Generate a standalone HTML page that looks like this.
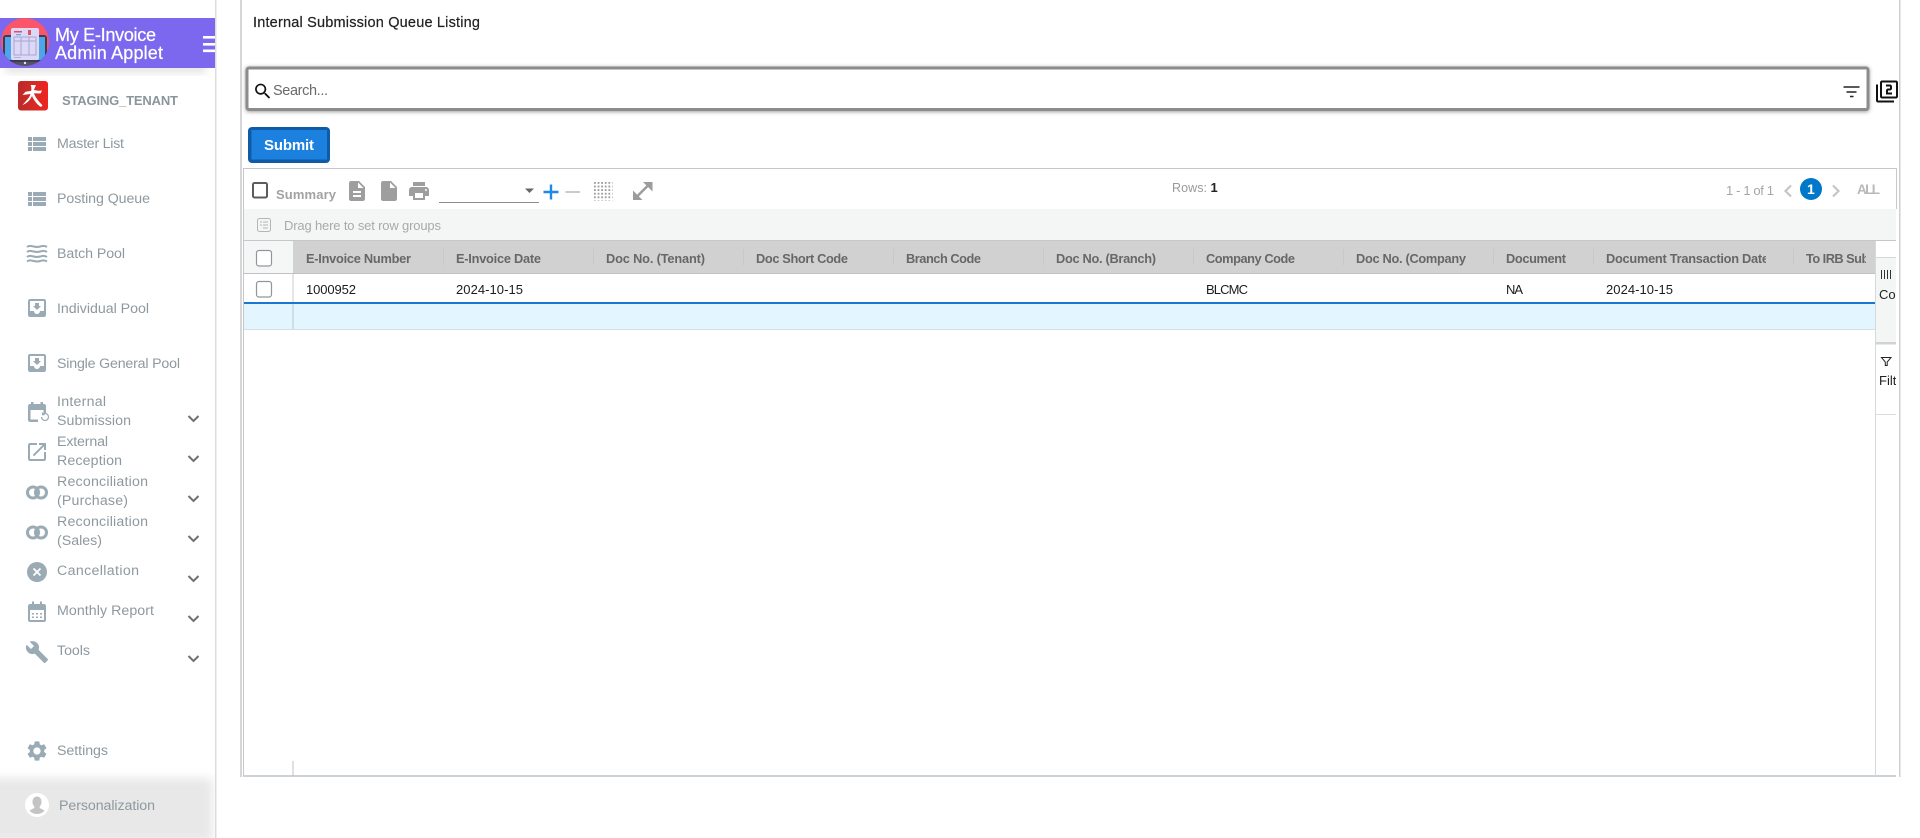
<!DOCTYPE html>
<html lang="en">
<head>
<meta charset="utf-8">
<title>Internal Submission Queue Listing</title>
<style>
html,body{margin:0;padding:0;width:1920px;height:838px;overflow:hidden;background:#fff}
svg{display:block}
text{font-family:"Liberation Sans",sans-serif;white-space:pre}
.m{font-size:14.2px;fill:#8e999f}
.h{font-size:12.8px;font-weight:bold;fill:#676767}
.d{font-size:13px;fill:#1c1c1c}
.ic{fill:#9aabb6}
.g{fill:#9e9e9e}
</style>
</head>
<body>
<svg width="1920" height="838" viewBox="0 0 1920 838" xmlns="http://www.w3.org/2000/svg">
<defs>
<filter id="sh" x="-5%" y="-40%" width="110%" height="200%"><feGaussianBlur stdDeviation="4"/></filter>
<filter id="s2" x="-2%" y="-30%" width="104%" height="160%"><feGaussianBlur stdDeviation="2.200"/></filter>
<filter id="s3" x="-20%" y="-40%" width="140%" height="180%"><feGaussianBlur stdDeviation="5"/></filter>
<clipPath id="logoC"><circle cx="25" cy="42" r="24"/></clipPath>
<clipPath id="sideC"><rect x="0" y="0" width="215" height="838"/></clipPath>
<clipPath id="c1"><rect x="1600" y="245" width="166" height="25"/></clipPath>
<clipPath id="c2"><rect x="1800" y="245" width="66" height="25"/></clipPath>
<clipPath id="c3"><rect x="1876" y="258" width="20" height="160"/></clipPath>
<clipPath id="c4"><rect x="1350" y="245" width="130" height="21"/></clipPath>
<linearGradient id="redG" x1="0" y1="0" x2="1" y2="0"><stop offset="0" stop-color="#bb2a2a"/><stop offset=".5" stop-color="#d42a26"/><stop offset="1" stop-color="#f12320"/></linearGradient>
<pattern id="dots" x="594" y="182" width="3.6" height="3.6" patternUnits="userSpaceOnUse"><rect width="1.8" height="1.8" fill="#9b9b9b"/></pattern>
</defs>

<!-- SIDEBAR -->
<rect x="215" y="0" width="1.5" height="838" fill="#dcdcdc"/>
<g clip-path="url(#sideC)">
  <rect x="6" y="66" width="200" height="6" fill="#888" opacity=".3" filter="url(#sh)"/>
  <rect x="0" y="18" width="215" height="50" fill="#7b68ee"/>
  <rect x="-30" y="778" width="243" height="64" fill="#e8e8e8" filter="url(#s3)"/>
</g>
<g clip-path="url(#logoC)">
  <rect x="0" y="18" width="50" height="48" fill="#fa5568"/>
  <rect x="0" y="52" width="50" height="16" fill="#545268"/>
  <rect x="3" y="35" width="44" height="27" rx="3" fill="#3e3c55"/>
  <rect x="5" y="37" width="40" height="23" fill="#4da5ec"/>
  <rect x="11" y="28" width="28" height="32" rx="2" fill="#dcd9f7"/>
  <rect x="14" y="37" width="22" height="18" fill="none" stroke="#a9a5d6" stroke-width="1"/>
  <path d="M14 41h22M21 37v18M29 37v18" stroke="#a9a5d6" stroke-width="1"/>
  <rect x="14" y="31" width="8" height="1.5" fill="#e84d5f"/>
  <rect x="16" y="34" width="5" height="1.3" fill="#6ba7e8"/>
  <rect x="28" y="30" width="3" height="5" fill="#e84d5f"/>
  <rect x="14" y="57" width="7" height="1" fill="#b5b2dc"/>
  <circle cx="25" cy="63" r="1.2" fill="#e6e6f5"/>
</g>
<text x="55" y="41" font-size="18" fill="#fff" stroke="#fff" stroke-width=".25" textLength="101" lengthAdjust="spacing">My E-Invoice</text>
<text x="55" y="59" font-size="18" fill="#fff" stroke="#fff" stroke-width=".25" textLength="108" lengthAdjust="spacing">Admin Applet</text>
<path d="M203 36h12v2.600h-12zM203 43h12v2.600h-12zM203 49.500h12v2.600h-12z" fill="#fff"/>

<rect x="18" y="81" width="30" height="29.500" rx="3" fill="url(#redG)"/>
<path d="M30 84.500l5.500 .5c1 .4-1 3-1.500 5 2.500 .7 5 .9 8 .5l-1.500 3-6.500-.3c1 3.500 4 7.500 8.500 12l-1.500 1.800c-3.500-2-7-6.500-9-11-2 4.500-5.500 7.500-9.500 9l3.500-4c2.500-2.500 4-5 4.500-7l-8 1 3-3.300 5.700-.8c.5-2.500 0-4.700-.7-6.400z" fill="#fff"/>
<text x="62" y="105" font-size="13" font-weight="bold" fill="#8b959b" textLength="116" lengthAdjust="spacing">STAGING_TENANT</text>

<text class="m" x="57" y="148" textLength="67" lengthAdjust="spacing">Master List</text>
<text class="m" x="57" y="203" textLength="93" lengthAdjust="spacing">Posting Queue</text>
<text class="m" x="57" y="258" textLength="68" lengthAdjust="spacing">Batch Pool</text>
<text class="m" x="57" y="313" textLength="92" lengthAdjust="spacing">Individual Pool</text>
<text class="m" x="57" y="368" textLength="123" lengthAdjust="spacing">Single General Pool</text>
<text class="m" x="57" y="406" textLength="49" lengthAdjust="spacing">Internal</text>
<text class="m" x="57" y="425" textLength="74" lengthAdjust="spacing">Submission</text>
<text class="m" x="57" y="446" textLength="51" lengthAdjust="spacing">External</text>
<text class="m" x="57" y="465" textLength="65" lengthAdjust="spacing">Reception</text>
<text class="m" x="57" y="486" textLength="91" lengthAdjust="spacing">Reconciliation</text>
<text class="m" x="57" y="505" textLength="71" lengthAdjust="spacing">(Purchase)</text>
<text class="m" x="57" y="526" textLength="91" lengthAdjust="spacing">Reconciliation</text>
<text class="m" x="57" y="545" textLength="45" lengthAdjust="spacing">(Sales)</text>
<text class="m" x="57" y="575" textLength="82" lengthAdjust="spacing">Cancellation</text>
<text class="m" x="57" y="615" textLength="97" lengthAdjust="spacing">Monthly Report</text>
<text class="m" x="57" y="655" textLength="33" lengthAdjust="spacing">Tools</text>
<text class="m" x="57" y="755" textLength="51" lengthAdjust="spacing">Settings</text>
<text class="m" x="59" y="810" textLength="96" lengthAdjust="spacing">Personalization</text>

<!-- sidebar icons -->
<path class="ic" transform="translate(25 132)" d="M3 14h4v-4H3v4zm0 5h4v-4H3v4zM3 9h4V5H3v4zm5 5h13v-4H8v4zm0 5h13v-4H8v4zM8 5v4h13V5H8z"/>
<path class="ic" transform="translate(25 187)" d="M3 14h4v-4H3v4zm0 5h4v-4H3v4zM3 9h4V5H3v4zm5 5h13v-4H8v4zm0 5h13v-4H8v4zM8 5v4h13V5H8z"/>
<g fill="none" stroke="#9aabb6" stroke-width="2">
  <path d="M27 247c3-2.500 6 0 10 0s6-2.500 10 0"/>
  <path d="M27 252c3-2.500 6 0 10 0s6-2.500 10 0"/>
  <path d="M27 257c3-2.500 6 0 10 0s6-2.500 10 0"/>
  <path d="M27 261.500c3-2.500 6 0 10 0s6-2.500 10 0"/>
</g>
<path class="ic" transform="translate(25 296)" d="M19 3H4.990c-1.110 0-1.980.9-1.980 2L3 19c0 1.100.88 2 1.990 2H19c1.100 0 2-.9 2-2V5c0-1.100-.9-2-2-2zm0 12h-4c0 1.660-1.350 3-3 3s-3-1.340-3-3H4.990V5H19v10zm-3-5h-2V7h-4v3H8l4 4 4-4z"/>
<path class="ic" transform="translate(25 351)" d="M19 3H4.990c-1.110 0-1.980.9-1.980 2L3 19c0 1.100.88 2 1.990 2H19c1.100 0 2-.9 2-2V5c0-1.100-.9-2-2-2zm0 12h-4c0 1.660-1.350 3-3 3s-3-1.340-3-3H4.990V5H19v10zm-3-5h-2V7h-4v3H8l4 4 4-4z"/>
<path class="ic" d="M31 402h2.500v2h7v-2h2.500v2h1c1.100 0 2 .9 2 2v7h-2.500v-3H30.500v9.500H38v2.500h-8c-1.100 0-2-.9-2-2v-14c0-1.100.9-2 2-2h1z"/>
<path d="M41.500 417a3.500 3.500 0 1 0 1-2.500M42.500 412.500v2.200h2.200" fill="none" stroke="#9aabb6" stroke-width="1.200"/>
<path class="ic" transform="translate(25 440)" d="M19 19H5V5h7V3H5c-1.110 0-2 .9-2 2v14c0 1.100.89 2 2 2h14c1.100 0 2-.9 2-2v-7h-2v7zM14 3v2h3.590l-9.830 9.830 1.410 1.410L19 6.410V10h2V3h-7z"/>
<g fill="none" stroke="#9aabb6" stroke-width="3"><circle cx="33" cy="492.500" r="5.500"/><circle cx="41" cy="492.500" r="5.500"/></g>
<g fill="none" stroke="#9aabb6" stroke-width="3"><circle cx="33" cy="532.500" r="5.500"/><circle cx="41" cy="532.500" r="5.500"/></g>
<circle cx="37" cy="572" r="10" fill="#9aabb6"/>
<path d="M33.500 568.500l7 7M40.500 568.500l-7 7" stroke="#fff" stroke-width="1.800"/>
<path class="ic" d="M32 601.500h2v2.500h6v-2.500h2v2.500h2c1.100 0 2 .9 2 2v14c0 1.100-.9 2-2 2H30c-1.100 0-2-.9-2-2v-14c0-1.100.9-2 2-2h2z"/>
<rect x="30" y="610" width="14" height="10" fill="#fff"/>
<path d="M32 613h2v1.500h-2zM36 613h2v1.500h-2zM40 613h2v1.500h-2zM32 616.500h2v1.500h-2zM36 616.500h2v1.500h-2zM40 616.500h2v1.500h-2z" fill="#9aabb6"/>
<path class="ic" transform="translate(25 640)" d="M22.700 19l-9.100-9.100c.9-2.300.4-5-1.500-6.900-2-2-5-2.400-7.400-1.300L9 6 6 9 1.600 4.700C.4 7.100.9 10.100 2.900 12.100c1.900 1.900 4.600 2.400 6.900 1.500l9.100 9.100c.4.4 1 .4 1.400 0l2.300-2.300c.5-.4.5-1.100.1-1.400z"/>
<path class="ic" transform="translate(25 739)" d="M19.140 12.940c.04-.3.06-.61.06-.94 0-.32-.02-.64-.07-.94l2.030-1.580c.18-.14.23-.41.12-.61l-1.920-3.320c-.12-.22-.37-.29-.59-.22l-2.390.96c-.5-.38-1.030-.7-1.620-.94l-.36-2.540c-.04-.24-.24-.41-.48-.41h-3.840c-.24 0-.43.17-.47.41l-.36 2.540c-.59.24-1.130.57-1.620.94l-2.390-.96c-.22-.08-.47 0-.59.22L2.740 8.870c-.12.21-.08.47.12.61l2.030 1.580c-.05.3-.09.63-.09.94s.02.64.07.94l-2.030 1.580c-.18.14-.23.41-.12.61l1.920 3.320c.12.22.37.29.59.22l2.390-.96c.5.38 1.030.7 1.620.94l.36 2.540c.05.24.24.41.48.41h3.840c.24 0 .44-.17.47-.41l.36-2.540c.59-.24 1.130-.56 1.620-.94l2.390.96c.22.08.47 0 .59-.22l1.920-3.320c.12-.22.07-.47-.12-.61l-2.010-1.580zM12 15.600c-1.980 0-3.600-1.620-3.600-3.600s1.620-3.600 3.600-3.600 3.600 1.620 3.600 3.600-1.620 3.600-3.600 3.600z"/>
<g fill="none" stroke="#707070" stroke-width="2">
  <path d="M188.500 416l5 5 5-5"/><path d="M188.500 456l5 5 5-5"/><path d="M188.500 496l5 5 5-5"/><path d="M188.500 536l5 5 5-5"/>
  <path d="M188.500 576l5 5 5-5"/><path d="M188.500 616l5 5 5-5"/><path d="M188.500 656l5 5 5-5"/>
</g>
<circle cx="37" cy="805" r="12" fill="#fff"/>
<path d="M37 796.500c3 0 4.500 2.500 4.500 5.500 0 2-.8 3.500-1.800 4.500v1.500l4.800 2.500c-1.500 2-4 3.500-7.500 3.500s-6-1.500-7.500-3.500l4.800-2.500v-1.500c-1-1-1.800-2.500-1.800-4.500 0-3 1.500-5.500 4.500-5.500z" fill="#c4c4c4"/>

<!-- MAIN -->
<rect x="240" y="0" width="2" height="777" fill="#d6d6d6"/>
<rect x="1899" y="0" width="1.500" height="777" fill="#cfcfcf"/>
<text x="253" y="27" font-size="14.500" fill="#222" stroke="#222" stroke-width=".2" textLength="227" lengthAdjust="spacing">Internal Submission Queue Listing</text>

<!-- search -->
<rect x="246" y="67.500" width="1623" height="44" rx="2" fill="#666" opacity=".75" filter="url(#s2)"/>
<rect x="247" y="68" width="1621" height="41.500" rx="2" fill="#fff" stroke="#8c8c8c" stroke-width="3"/>
<path transform="translate(252.500 81) scale(.86)" fill="#111" d="M15.500 14h-.79l-.28-.27C15.410 12.590 16 11.110 16 9.500 16 5.910 13.090 3 9.500 3S3 5.910 3 9.500 5.910 16 9.500 16c1.610 0 3.090-.59 4.230-1.570l.27.28v.79l5 4.990L20.490 19l-4.990-5zm-6 0C7.010 14 5 11.990 5 9.500S7.010 5 9.500 5 14 7.010 14 9.500 11.990 14 9.500 14z"/>
<text x="273" y="95" font-size="14.500" fill="#6a6a6a" textLength="55" lengthAdjust="spacing">Search...</text>
<path d="M1843.500 87h16M1846.500 92h10M1850 96.500h3.500" stroke="#222" stroke-width="1.600"/>
<path transform="translate(1875 79.500)" fill="#111" d="M3 5H1v16c0 1.100.9 2 2 2h16v-2H3V5zm18-4H7c-1.100 0-2 .9-2 2v14c0 1.100.9 2 2 2h14c1.100 0 2-.9 2-2V3c0-1.100-.9-2-2-2zm0 16H7V3h14v14zm-4-4h-4v-2h2c1.100 0 2-.89 2-2V7c0-1.110-.9-2-2-2h-4v2h4v2h-2c-1.100 0-2 .89-2 2v4h6v-2z"/>

<!-- submit -->
<rect x="248" y="127" width="82" height="36" rx="4" fill="#0f5ba5"/>
<rect x="251.500" y="130" width="75.500" height="29.500" fill="#1b80de"/>
<text x="264" y="150" font-size="15" font-weight="bold" fill="#fff" textLength="50" lengthAdjust="spacing">Submit</text>

<!-- grid frame -->
<rect x="243" y="168" width="1653" height="1" fill="#c2c8cc"/>
<rect x="243" y="168" width="1" height="608" fill="#c2c8cc"/>
<rect x="1896" y="168" width="1" height="41" fill="#c2c8cc"/>
<rect x="243" y="775" width="1653" height="2" fill="#ccd2d6"/>

<!-- toolbar -->
<rect x="253" y="183" width="14" height="14.500" rx="1.500" fill="none" stroke="#5c5c5c" stroke-width="2"/>
<text x="276" y="199" font-size="13" font-weight="bold" fill="#a2a2a2" textLength="60" lengthAdjust="spacing">Summary</text>
<path class="g" transform="translate(345 179)" d="M14 2H6c-1.100 0-1.990.9-1.990 2L4 20c0 1.100.89 2 1.990 2H18c1.100 0 2-.9 2-2V8l-6-6zm2 16H8v-2h8v2zm0-4H8v-2h8v2zm-3-5V3.500L18.500 9H13z"/>
<path class="g" transform="translate(377 179)" d="M6 2c-1.100 0-1.990.9-1.990 2L4 20c0 1.100.89 2 1.990 2H18c1.100 0 2-.9 2-2V8l-6-6H6zm7 7V3.500L18.500 9H13z"/>
<path class="g" transform="translate(407 179)" d="M19 8H5c-1.660 0-3 1.340-3 3v6h4v4h12v-4h4v-6c0-1.660-1.340-3-3-3zm-3 11H8v-5h8v5zm3-7c-.55 0-1-.45-1-1s.45-1 1-1 1 .45 1 1-.45 1-1 1zm-1-9H6v4h12V3z"/>
<rect x="439" y="202" width="100" height="1" fill="#8d8d8d"/>
<path d="M525 188.500h9l-4.500 4.500z" fill="#666"/>
<path d="M551 184.500v15M543.500 192h15" stroke="#1e88e5" stroke-width="2.400"/>
<path d="M565.500 192h14.500" stroke="#cccccc" stroke-width="2"/>
<rect x="594" y="182" width="18.500" height="18.500" fill="url(#dots)"/>
<path d="M637 196.500L648 185.500" stroke="#9c9c9c" stroke-width="2.500"/>
<path d="M643 182h9.500v9.500zM633 190.500v9.500h9.500z" fill="#9c9c9c"/>
<text x="1172" y="192" font-size="12.500" fill="#9a9a9a" textLength="35" lengthAdjust="spacing">Rows:</text>
<text x="1210.500" y="192" font-size="13" font-weight="bold" fill="#222">1</text>
<text x="1726" y="195" font-size="13" fill="#a5a5a5" textLength="48" lengthAdjust="spacing">1 - 1 of 1</text>
<path d="M1791 185.500l-5.500 5.500 5.500 5.500M1833 185.500l5.500 5.500-5.500 5.500" fill="none" stroke="#c6c6c6" stroke-width="2.200"/>
<circle cx="1811" cy="189" r="11" fill="#0078c9"/>
<text x="1807" y="194" font-size="14" font-weight="bold" fill="#fff">1</text>
<text x="1857" y="194" font-size="13.500" font-weight="bold" fill="#b8b8b8" textLength="23" lengthAdjust="spacing">ALL</text>

<!-- row groups -->
<rect x="244" y="209" width="1652" height="31" fill="#f4f6f6"/>
<rect x="257.500" y="218.500" width="13" height="13" rx="2" fill="none" stroke="#b5b5b5"/>
<path d="M260 222h2M263 222h5M263 225h5M263 228h5M260 225h2" stroke="#b5b5b5" stroke-width="1"/>
<text x="284" y="230" font-size="13" fill="#a9a9a9" textLength="157" lengthAdjust="spacing">Drag here to set row groups</text>

<!-- header -->
<rect x="244" y="240" width="1652" height="1" fill="#c2c8cc"/>
<rect x="244" y="241" width="49" height="32" fill="#f5f7f7"/>
<rect x="293" y="241" width="1582" height="32" fill="#d1d1d1"/>
<rect x="244" y="273" width="1631" height="1" fill="#bcc2c6"/>
<rect x="292.500" y="274" width="1" height="55" fill="#c9ced1"/>
<g fill="#c8c8c8">
  <rect x="443" y="249" width="1" height="16"/><rect x="593" y="249" width="1" height="16"/><rect x="743" y="249" width="1" height="16"/><rect x="893" y="249" width="1" height="16"/><rect x="1043" y="249" width="1" height="16"/><rect x="1193" y="249" width="1" height="16"/><rect x="1343" y="249" width="1" height="16"/><rect x="1493" y="249" width="1" height="16"/><rect x="1593" y="249" width="1" height="16"/><rect x="1793" y="249" width="1" height="16"/>
</g>
<rect x="256.500" y="250.500" width="15" height="15.500" rx="2.500" fill="#fff" stroke="#8f979b" stroke-width="1.200"/>
<text class="h" x="306" y="263" textLength="105" lengthAdjust="spacing">E-Invoice Number</text>
<text class="h" x="456" y="263" textLength="85" lengthAdjust="spacing">E-Invoice Date</text>
<text class="h" x="606" y="263" textLength="99" lengthAdjust="spacing">Doc No. (Tenant)</text>
<text class="h" x="756" y="263" textLength="92" lengthAdjust="spacing">Doc Short Code</text>
<text class="h" x="906" y="263" textLength="75" lengthAdjust="spacing">Branch Code</text>
<text class="h" x="1056" y="263" textLength="100" lengthAdjust="spacing">Doc No. (Branch)</text>
<text class="h" x="1206" y="263" textLength="89" lengthAdjust="spacing">Company Code</text>
<g clip-path="url(#c4)"><text class="h" x="1356" y="263" textLength="110" lengthAdjust="spacing">Doc No. (Company</text></g>
<text class="h" x="1506" y="263" textLength="60" lengthAdjust="spacing">Document</text>
<g clip-path="url(#c1)"><text class="h" x="1606" y="263" textLength="163" lengthAdjust="spacing">Document Transaction Date</text></g>
<g clip-path="url(#c2)"><text class="h" x="1806" y="263" textLength="108" lengthAdjust="spacing">To IRB Submission</text></g>

<!-- rows -->
<rect x="256.500" y="281.500" width="15" height="15.500" rx="2.500" fill="#fff" stroke="#8f979b" stroke-width="1.200"/>
<text class="d" x="306" y="294" textLength="50" lengthAdjust="spacing">1000952</text>
<text class="d" x="456" y="294" textLength="67" lengthAdjust="spacing">2024-10-15</text>
<text class="d" x="1206" y="294" textLength="42" lengthAdjust="spacing">BLCMC</text>
<text class="d" x="1506" y="294" textLength="17" lengthAdjust="spacing">NA</text>
<text class="d" x="1606" y="294" textLength="67" lengthAdjust="spacing">2024-10-15</text>
<rect x="244" y="304" width="1631" height="25" fill="#e3f5ff"/>
<rect x="292.500" y="304" width="1" height="25" fill="#bcc6cc"/>
<rect x="244" y="302" width="1631" height="2" fill="#1976d2"/>
<rect x="244" y="329" width="1631" height="1" fill="#d8dde1"/>
<rect x="292.500" y="761" width="1" height="15" fill="#c0c0c0"/>

<!-- side panel -->
<rect x="1875" y="241" width="1" height="535" fill="#d4d9dc"/>
<rect x="1876" y="257" width="20" height="1" fill="#d4d8db"/>
<rect x="1876" y="258" width="20" height="84" fill="#f4f6f6"/>
<rect x="1876" y="342" width="20" height="2.500" fill="#d0d3d5"/>
<rect x="1876" y="414" width="20" height="1" fill="#d8dcdf"/>
<path d="M1881.500 270v9M1884.500 270v9M1887.500 270v9M1890.500 270v9" stroke="#333" stroke-width="1"/>
<g clip-path="url(#c3)">
  <text x="1879" y="299" font-size="13" fill="#222">Col</text>
  <text x="1879" y="385" font-size="13" fill="#222">Filt</text>
</g>
<path d="M1881.500 357.500h9.500l-3.800 4.500v3.500h-1.900v-3.500z" fill="none" stroke="#222" stroke-width="1"/>
</svg>
</body>
</html>
